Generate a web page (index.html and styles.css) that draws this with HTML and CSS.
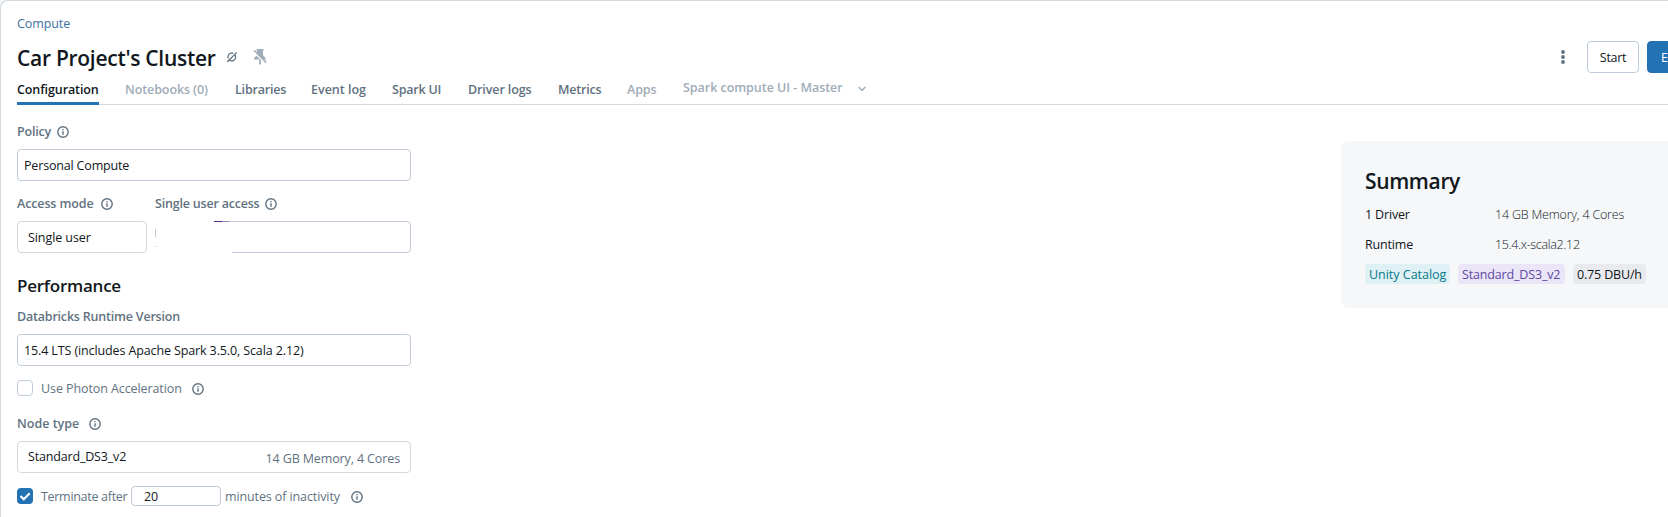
FILE: index.html
```html
<!DOCTYPE html>
<html lang="en">
<head>
<meta charset="utf-8">
<title>Car Project's Cluster</title>
<link rel="stylesheet" href="styles.css">
</head>
<body>
<svg class="defs" aria-hidden="true">
  <symbol id="info" viewBox="0 0 12 12">
    <circle cx="6" cy="6" r="5.2" fill="none" stroke="currentColor" stroke-width="1.4"/>
    <path d="M6 5.3V8.8M6 3v1.3" stroke="currentColor" stroke-width="1.4"/>
  </symbol>
</svg>
<main class="page">
  <a class="crumb">Compute</a>
  <header class="header">
    <h1 class="title">Car Project's Cluster</h1>
    <svg class="state" viewBox="0 0 12 12"><circle cx="5.8" cy="6" r="3.8" fill="none" stroke="currentColor" stroke-width="1.3"/><path d="M1.5 9.3L9.8 1" stroke="#fff" stroke-width="1.3"/><path d="M1.2 11L10.8 1.4" fill="none" stroke="currentColor" stroke-width="1.3"/></svg>
    <svg class="pin" viewBox="0 0 14 16"><path d="M3.6 0H10.6V1.6H10V6.2L12.6 9V10.5H8V15.5H6.2V10.5H1V9L4 6.2V1.6H3.6Z" fill="currentColor"/><path d="M0 2.2L12 14" stroke="#fff" stroke-width="1.6"/><path d="M1 1.2L13.2 13.4" stroke="currentColor" stroke-width="1.5"/></svg>
    <div class="actions">
      <svg class="dots" viewBox="0 0 4 14"><circle cx="2" cy="2" r="1.9"/><circle cx="2" cy="7" r="1.9"/><circle cx="2" cy="12" r="1.9"/></svg>
      <button class="btn">Start</button>
      <button class="btn primary">Edit</button>
    </div>
  </header>
  <nav class="tabs">
    <a class="tab active w82">Configuration</a>
    <a class="tab muted w84">Notebooks (0)</a>
    <a class="tab w50">Libraries</a>
    <a class="tab w55">Event log</a>
    <a class="tab w50">Spark UI</a>
    <a class="tab w64">Driver logs</a>
    <a class="tab w43">Metrics</a>
    <a class="tab muted w30">Apps</a>
    <a class="tab muted raised">Spark compute UI - Master <svg class="chev" viewBox="0 0 8 6"><path d="M.7 1L4 4.4L7.3 1" fill="none" stroke="currentColor" stroke-width="1.5"/></svg></a>
  </nav>
  <div class="content">
    <form class="form">
      <div class="label">Policy <svg class="info"><use href="#info"/></svg></div>
      <div class="field">Personal Compute</div>
      <div class="access">
        <div class="mode">
          <div class="label loose">Access mode <svg class="info"><use href="#info"/></svg></div>
          <div class="field soft inset">Single user</div>
        </div>
        <div class="user">
          <div class="label">Single user access <svg class="info"><use href="#info"/></svg></div>
          <div class="field redacted"><span class="mask"><i class="mark"></i><i class="edge"></i><i class="speck"></i></span></div>
        </div>
      </div>
      <h2 class="section">Performance</h2>
      <div class="label">Databricks Runtime Version</div>
      <div class="field runtime">15.4 LTS (includes Apache Spark 3.5.0, Scala 2.12)</div>
      <div class="row photon"><span class="box"></span><span class="text w140">Use Photon Acceleration</span><svg class="info"><use href="#info"/></svg></div>
      <div class="label node">Node type <svg class="info"><use href="#info"/></svg></div>
      <div class="field soft inset split"><span class="type">Standard_DS3_v2</span><span class="spec">14 GB Memory, 4 Cores</span></div>
      <div class="row idle"><span class="box on"><svg viewBox="0 0 16 16"><path d="M3.5 8L6.8 11.2L12.7 5.3" fill="none" stroke="#fff" stroke-width="2.1"/></svg></span><span class="text w90">Terminate after</span><span class="minutes">20</span><span class="text w115">minutes of inactivity</span><svg class="info"><use href="#info"/></svg></div>
    </form>
    <aside class="summary">
      <h2 class="summary-title">Summary</h2>
      <dl class="facts">
        <dt>1 Driver</dt><dd>14 GB Memory, 4 Cores</dd>
        <dt>Runtime</dt><dd class="version">15.4.x-scala2.12</dd>
      </dl>
      <div class="tags"><span class="tag teal">Unity Catalog</span><span class="tag purple">Standard_DS3_v2</span><span class="tag gray">0.75 DBU/h</span></div>
    </aside>
  </div>
</main>
</body>
</html>
```

FILE: styles.css
```css
* { box-sizing: border-box; }
body {
  margin: 0;
  overflow: hidden;
  background: #f3f6f8;
  color: #11171c;
  font: 12.5px/20px "Open Sans", "Noto Sans", sans-serif;
  letter-spacing: -0.16px;
  white-space: nowrap;
}
.defs { position: absolute; width: 0; height: 0; }
.page {
  height: 517px;
  overflow: hidden;
  padding: 12px 0 0 16px;
  background: #fff;
  border: solid #d1d9e1;
  border-width: 1px 0 0 1px;
  border-top-left-radius: 8px;
}
.crumb { display: block; height: 20px; padding-top: 1px; color: #3a72a3; letter-spacing: -0.1px; }

.header { display: flex; height: 46px; padding-top: 8px; align-items: flex-start; }
.title { margin: 3px 0 0; width: 209px; font-size: 21px; line-height: 28px; font-weight: 600; letter-spacing: -0.28px; }
.state { width: 12px; height: 12px; margin-top: 10px; color: #5f7281; }
.pin { width: 14px; height: 16px; margin: 8px 0 0 15px; color: #a0acb7; }
.actions { display: flex; margin-left: auto; align-items: center; }
.dots { width: 4px; height: 14px; margin-right: 22px; fill: #5f7281; }
.btn {
  width: 52px;
  height: 32px;
  margin-right: 8px;
  padding: 1px 0 0;
  border: 1px solid #c0cdd8;
  border-radius: 4px;
  background: #fff;
  color: inherit;
  font: inherit;
  letter-spacing: -0.3px;
}
.btn.primary { width: 47px; margin-right: -26px; padding-left: 13px; text-align: left; background: #2272b4; border-color: #2272b4; color: #fff; }

.tabs { display: flex; gap: 26px; height: 26px; border-bottom: 1px solid #d1d9e1; }
.tab { height: 26px; padding-top: 1px; color: #5f7281; font-weight: 600; letter-spacing: -0.1px; }
.tab.active { color: #11171c; border-bottom: 3px solid #2272b4; }
.tab.muted { color: #a0acb7; }
.tab.raised { margin-top: -2px; letter-spacing: -0.04px; }
.chev { width: 8px; height: 6px; margin-left: 12px; }
.w82 { width: 82px; }
.w84 { width: 84px; }
.w50 { width: 50px; letter-spacing: -0.2px; }
.w55 { width: 55px; letter-spacing: 0; }
.w64 { width: 64px; }
.w43 { width: 43px; letter-spacing: -0.22px; }
.w30 { width: 30px; }

.content { display: flex; justify-content: space-between; align-items: flex-start; }
.form { width: 394px; margin: 0; padding-top: 16px; }
.label { display: flex; gap: 6px; align-items: center; height: 20px; margin-bottom: 8px; padding-top: 2px; color: #5f7281; font-weight: 600; letter-spacing: -0.2px; }
.label.loose { gap: 7px; letter-spacing: -0.12px; }
.info { width: 12px; height: 12px; flex: none; color: #5f7281; }
.field { height: 32px; padding: 0 6px; border: 1px solid #c0cdd8; border-radius: 4px; line-height: 32px; letter-spacing: -0.17px; }
.field.soft { border-color: #d1d9e1; }
.field.inset { padding: 0 10px; letter-spacing: -0.08px; }
.field.runtime { letter-spacing: -0.12px; }
.access { display: flex; gap: 8px; margin-top: 12px; }
.mode { width: 130px; }
.user { flex: 1; }
.redacted { position: relative; }
.mask { position: absolute; left: -1px; top: -1px; width: 77px; height: 32px; background: linear-gradient(#c0cdd8, #c0cdd8) 74px 0 / 3px 1px no-repeat #fff; }
.mark { position: absolute; left: 59px; top: 0; width: 15px; height: 1px; background: linear-gradient(90deg, #51288a 55%, #9a83bc 55%); }
.edge { position: absolute; left: 0; top: 8px; width: 1px; height: 8px; background: #c9cbdc; }
.speck { position: absolute; left: 0; top: 25px; width: 1px; height: 1px; background: #b8c0cb; }
.section { margin: 21px 0 8px; font-size: 17px; line-height: 24px; font-weight: 600; letter-spacing: -0.24px; }
.row { display: flex; align-items: center; height: 20px; color: #5f7281; }
.text { height: 20px; padding-top: 1px; }
.row .info { margin-top: 2px; }
.box { width: 16px; height: 16px; margin-right: 8px; border: 1px solid #c0cdd8; border-radius: 4px; }
.box.on { border: 0; background: #2272b4; }
.box svg { display: block; width: 16px; height: 16px; }
.photon { margin: 12px 0 15px; letter-spacing: -0.09px; }
.photon .info { margin-left: 11px; }
.w140 { width: 140px; }
.label.node { gap: 10px; letter-spacing: 0; }
.split { display: flex; justify-content: space-between; }
.type { line-height: 30px; letter-spacing: -0.17px; }
.spec { line-height: 34px; color: #5f7281; letter-spacing: -0.12px; }
.idle { margin-top: 13px; letter-spacing: -0.3px; }
.w90 { width: 90px; }
.minutes { width: 90px; height: 20px; margin-right: 4px; padding-left: 12px; border: 1px solid #c0cdd8; border-radius: 4px; line-height: 20px; color: #11171c; letter-spacing: -0.1px; }
.w115 { width: 115px; letter-spacing: -0.11px; }
.idle .info { margin-left: 11px; }

.summary { width: 360px; height: 167px; margin: 36px -33px 0 0; padding: 26px 24px; border-radius: 8px; background: #f5f7f9; }
.summary-title { margin: 0 0 10px; font-size: 21px; line-height: 28px; font-weight: 600; letter-spacing: -0.35px; }
.facts { display: grid; grid-template-columns: 130px auto; row-gap: 10px; margin: 0 0 9px; }
.facts dd { margin: 0; font-weight: 300; letter-spacing: -0.2px; }
.facts .version { letter-spacing: -0.32px; }
.tags { display: flex; gap: 8px; }
.tag { height: 20px; padding: 1px 4px 0; border-radius: 4px; }
.teal { width: 85px; background: #dff1f4; color: #04788a; letter-spacing: -0.02px; }
.purple { width: 107px; background: #ebe6f7; color: #6046a8; }
.gray { width: 73px; background: #e8eaee; color: #11171c; }
```
